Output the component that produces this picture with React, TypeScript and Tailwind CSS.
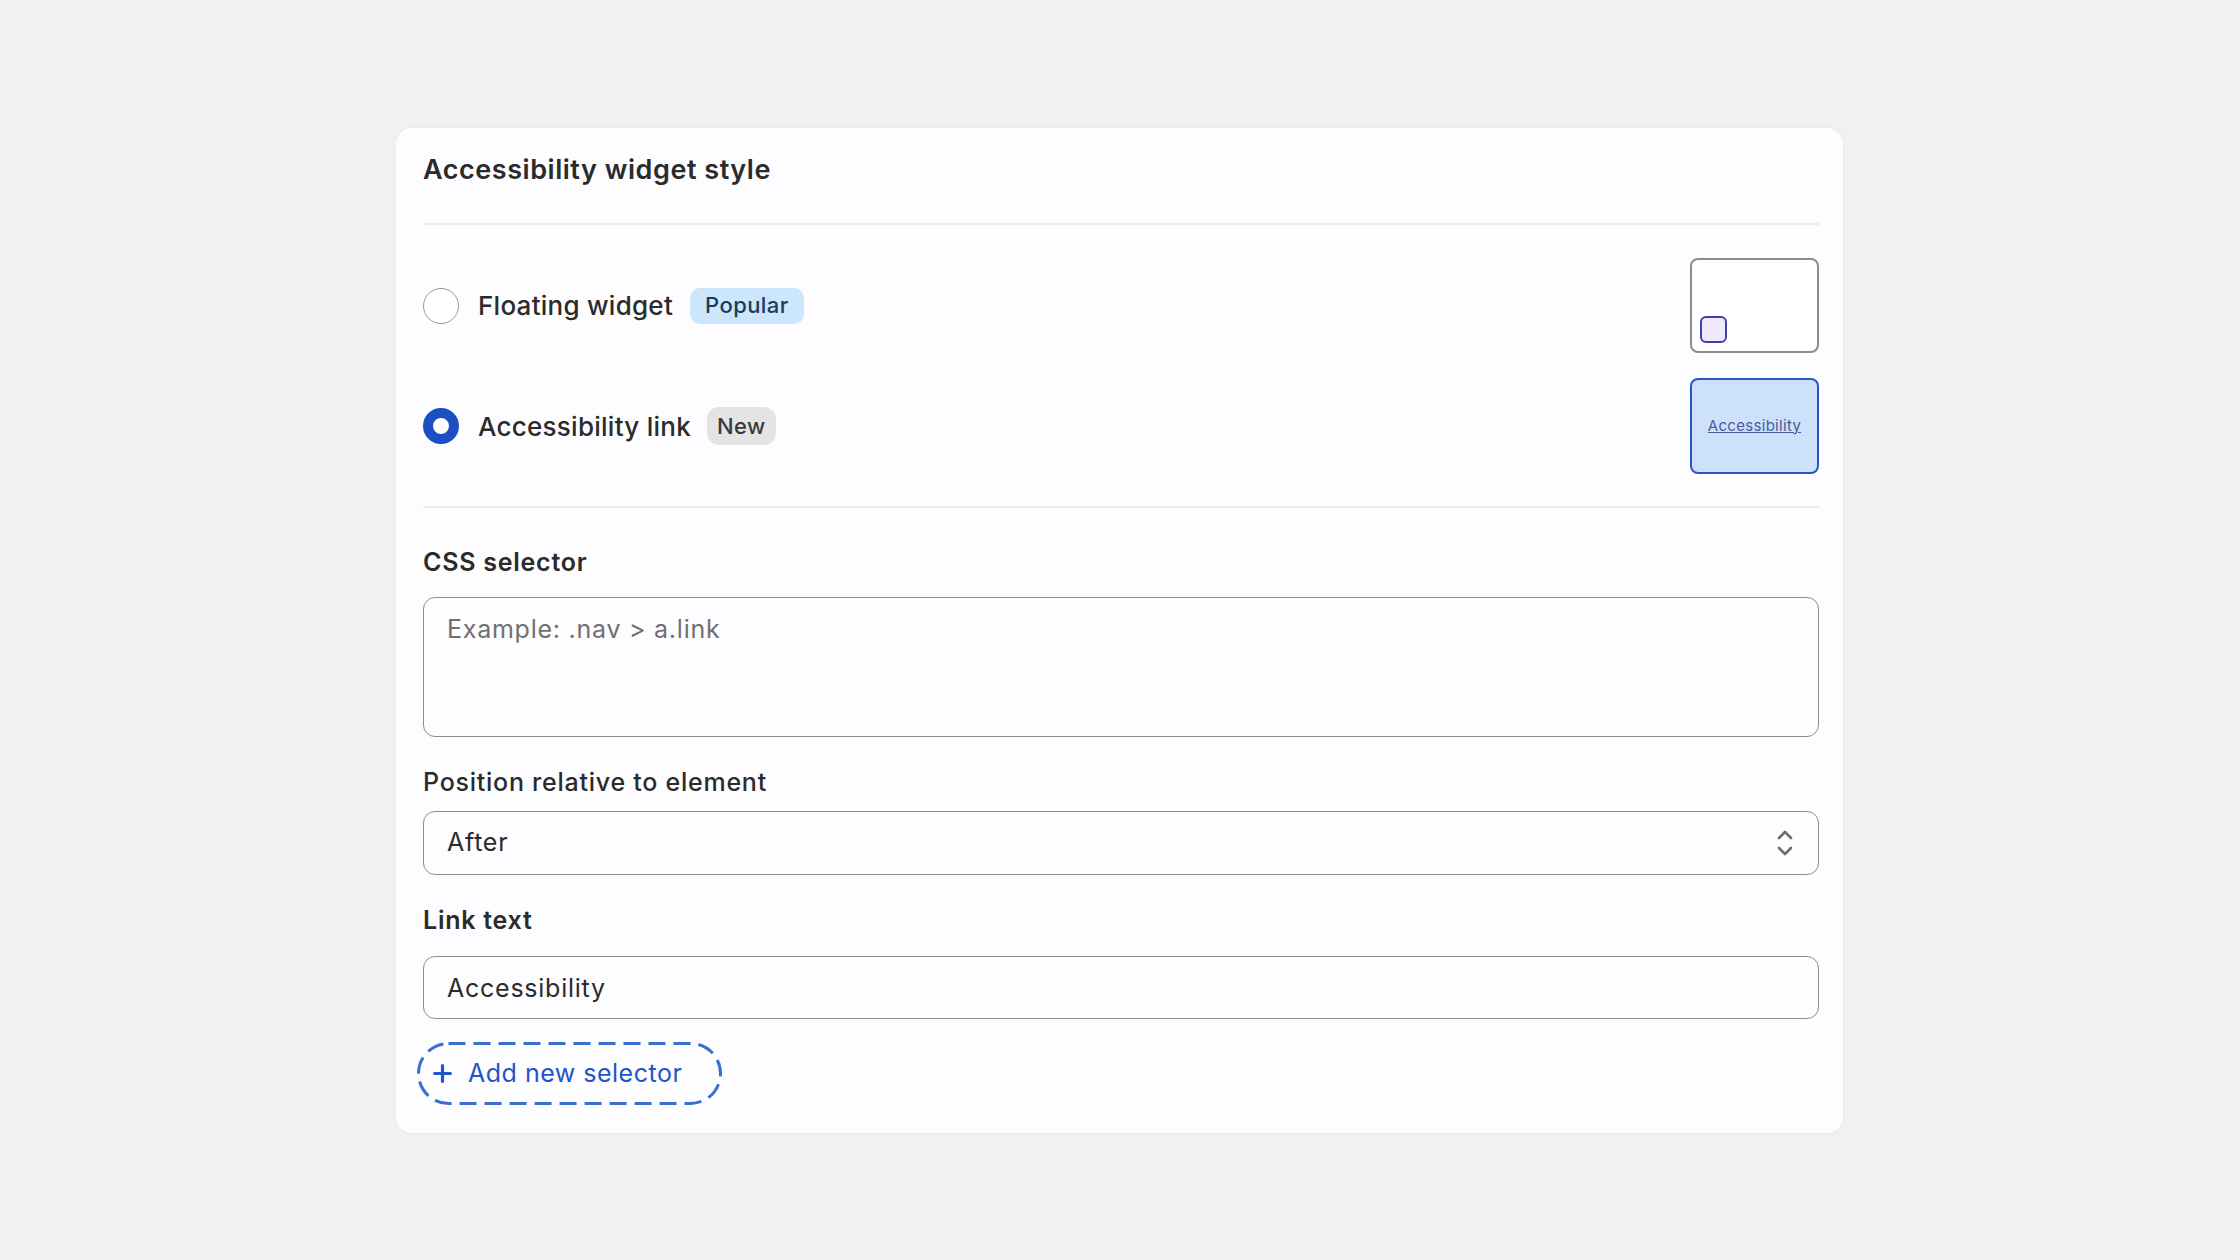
import { Plus } from 'lucide-react';

const options = [
  { id: 'floating', label: 'Floating widget', badge: 'Popular', selected: false },
  { id: 'link', label: 'Accessibility link', badge: 'New', selected: true },
];

const FloatingPreview = () => (
  <div className="w-[129px] h-[95px] rounded-[8px] border-2 border-[#8c8c8c] bg-white flex items-end p-[8px]">
    <div className="w-[27px] h-[27px] rounded-[6px] border-2 border-[#3d3fae] bg-[#eee9fb]" />
  </div>
);

const LinkPreview = () => (
  <div className="w-[129px] h-[96px] rounded-[8px] border-2 border-[#2c55c0] bg-[#cde1fb] flex items-center justify-center">
    <span className="text-[15px] tracking-[0.02em] text-[#4b5a9c] underline">Accessibility</span>
  </div>
);

export default function App() {
  return (
    <div className="min-h-screen bg-[#f1f0f2] pt-[128px] pl-[396px]" style={{ fontFamily: 'Inter, "Noto Sans", sans-serif' }}>
      <div className="w-[1447px] bg-[#fdfcfe] rounded-[16px] shadow-[0_0_6px_rgba(0,0,0,0.04)] pl-[27px] pr-[24px] pt-[27px] pb-[28px]">
        <h2 className="text-[27px] leading-[30px] tracking-[0.02em] font-semibold text-[#2b2b2b]">Accessibility widget style</h2>
        <div className="h-[2px] bg-[#ebeaec] mt-[38px]" />

        {/* Options */}
        <div className="flex flex-col gap-[25px] mt-[33px]">
          {options.map((opt) => (
            <div key={opt.id} className="flex items-center justify-between">
              <div className="flex items-center">
                {opt.selected ? (
                  <div className="w-[36px] h-[36px] rounded-full border-[10px] border-[#1c4fc4] bg-white" />
                ) : (
                  <div className="w-[36px] h-[36px] rounded-full border-[1.5px] border-[#9a9a9a] bg-white" />
                )}
                <span className="ml-[19px] text-[26px] tracking-[0.01em] font-medium text-[#2b2b2b]">{opt.label}</span>
                {opt.badge === 'Popular' ? (
                  <span className="ml-[17px] h-[36px] px-[15px] rounded-[10px] bg-[#cce6fc] text-[#1b3a5e] text-[22px] tracking-[0.02em] font-medium flex items-center">
                    {opt.badge}
                  </span>
                ) : (
                  <span className="ml-[16px] h-[38px] px-[10px] rounded-[12px] bg-[#e4e3e5] text-[#3a3a3a] text-[22px] tracking-[0.02em] font-medium flex items-center">
                    {opt.badge}
                  </span>
                )}
              </div>
              {opt.id === 'floating' ? <FloatingPreview /> : <LinkPreview />}
            </div>
          ))}
        </div>

        <div className="h-[2px] bg-[#ebeaec] mt-[32px]" />

        {/* CSS selector */}
        <label className="block mt-[40px] text-[25px] leading-[29px] tracking-[0.03em] font-semibold text-[#2b2b2b]">CSS selector</label>
        <textarea
          className="mt-[20px] block w-full h-[140px] rounded-[12px] border-[1.5px] border-[#8c8c8c] bg-[#fdfcfe] px-[23px] py-[13px] text-[25px] tracking-[0.03em] text-[#2b2b2b] placeholder:text-[#707070] resize-none outline-none"
          placeholder="Example: .nav > a.link"
        />

        {/* Position */}
        <label className="block mt-[31px] text-[25px] leading-[29px] tracking-[0.03em] font-medium text-[#2b2b2b]">Position relative to element</label>
        <div className="mt-[14px] h-[64px] rounded-[12px] border-[1.5px] border-[#8c8c8c] flex items-center justify-between pl-[23px] pr-[24px]">
          <span className="text-[25px] tracking-[0.03em] text-[#2b2b2b]">After</span>
          <svg width="18" height="28" viewBox="0 0 18 28" fill="none" stroke="#6e6e6e" strokeWidth="2.6" strokeLinecap="round" strokeLinejoin="round">
            <path d="M3 9 L9 3 L15 9" />
            <path d="M3 19 L9 25 L15 19" />
          </svg>
        </div>

        {/* Link text */}
        <label className="block mt-[31px] text-[25px] leading-[29px] tracking-[0.03em] font-semibold text-[#2b2b2b]">Link text</label>
        <input
          className="mt-[21px] block w-full h-[63px] rounded-[12px] border-[1.5px] border-[#8c8c8c] bg-[#fdfcfe] px-[23px] text-[25px] tracking-[0.03em] text-[#2b2b2b] outline-none"
          defaultValue="Accessibility"
        />

        {/* Add new selector */}
        <button className="relative mt-[23px] -ml-[6px] h-[63px] w-[305px] flex items-center pl-[12px] text-[25px] tracking-[0.02em] text-[#1f55c8]">
          <svg className="absolute inset-0" width="305" height="63" viewBox="0 0 305 63" fill="none">
            <rect x="1.5" y="1.5" width="302" height="60" rx="30" stroke="#3b6fcf" strokeWidth="3" strokeDasharray="17 8" />
          </svg>
          <Plus size={27} strokeWidth={2.8} className="text-[#1f55c8]" />
          <span className="ml-[12px]">Add new selector</span>
        </button>
      </div>
    </div>
  );
}
